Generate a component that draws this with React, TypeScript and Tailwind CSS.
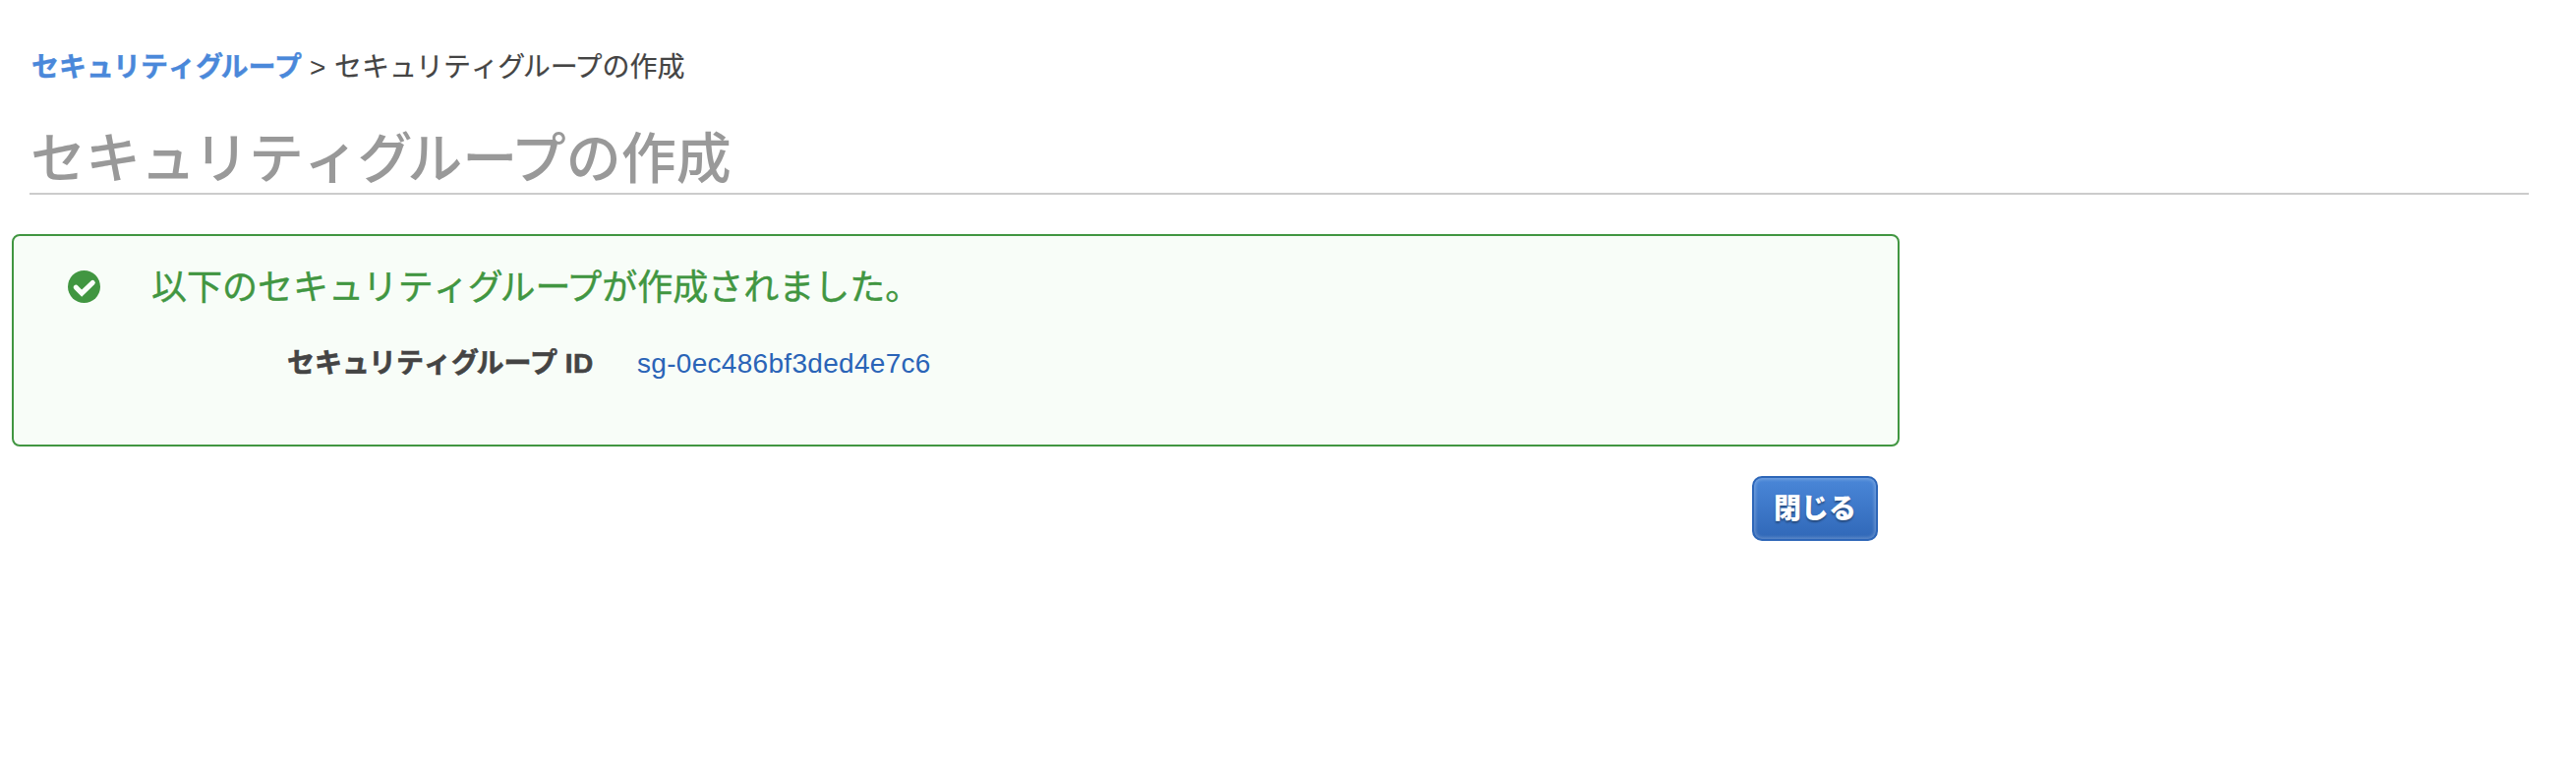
function CheckBadge() {
  return (
    <svg viewBox="0 0 33 33" className="mt-[35px] h-[33px] w-[33px] shrink-0">
      <circle cx="16.5" cy="16.5" r="16.5" fill="#419641" />
      <path d="M8.3 17.2 L14.2 23.2 L25.2 12.5" fill="none" stroke="#fafefa" strokeWidth="5.2" strokeLinejoin="miter" strokeLinecap="round" />
    </svg>
  );
}

function SecurityGroup() {
  return (
    <>
      セキ<span className="tracking-[-0.035em]">ュ</span>リテ<span className="tracking-[-0.03em]">ィ</span>
      <span className="tracking-[-0.09em]">グ</span>ル<span className="tracking-[-0.12em]">ー</span>プ
    </>
  );
}

function SecurityGroupBold() {
  return (
    <>
      セキ<span className="tracking-[-0.04em]">ュ</span>リティ
      <span className="tracking-[-0.09em]">グ</span>ル<span className="tracking-[-0.05em]">ー</span>プ
    </>
  );
}

export default function App() {
  return (
    <div className="flex h-[788px] w-full flex-col bg-white font-['Liberation_Sans','Noto_Sans_CJK_JP',sans-serif] text-[28px] leading-[40px] text-[#444444] [font-kerning:none]">
      <nav lang="ja" className="ml-8 mt-[49px] flex h-10 whitespace-nowrap">
        <a className="w-[283px] font-bold text-[#4a88da] [-webkit-text-stroke:0.4px_#4a88da]"><SecurityGroupBold /></a>
        <span className="w-[25px]">&gt;</span>
        <span className="[-webkit-text-stroke:0.2px_#444444]"><SecurityGroup />の作成</span>
      </nav>
      <h1 lang="ja" className="ml-[30px] mr-12 mt-[31px] h-[78px] whitespace-nowrap border-b-2 border-[#cccccc] pl-px text-[56px] font-medium leading-[84px] text-[#999999]">
        <SecurityGroup />の作成
      </h1>
      <section className="ml-3 mt-10 flex h-[216px] w-[1920px] rounded-lg border-2 border-[#419641] bg-[#f8fdf8] pl-[55px]">
        <CheckBadge />
        <div lang="ja" className="ml-[52px] whitespace-nowrap">
          <h2 className="mt-[29px] text-[36px] leading-[48px] text-[#419641] [-webkit-text-stroke:0.4px_#419641]">以下の<SecurityGroup />が作成されました。</h2>
          <div className="ml-[138px] mt-[33px] flex h-10">
            <span className="w-[356px] font-bold [-webkit-text-stroke:0.6px_#444444]">
              <SecurityGroupBold /> <span className="tracking-[0.5px]">ID</span>
            </span>
            <a className="tracking-[0.3px] text-[#2a64b7]">sg-0ec486bf3ded4e7c6</a>
          </div>
        </div>
      </section>
      <button lang="ja" className="ml-[1782px] mt-[30px] flex h-[66px] w-32 items-center justify-center rounded-[10px] border-2 border-[#2d66b8] bg-linear-to-b from-[#4a87d8] to-[#3068b8] pt-[2px] text-[28px] font-black text-white shadow-[inset_0_0_3px_2px_rgba(255,255,255,0.2)] [text-shadow:0_2px_2px_rgba(0,0,0,0.35)]">
        閉じる
      </button>
    </div>
  );
}
